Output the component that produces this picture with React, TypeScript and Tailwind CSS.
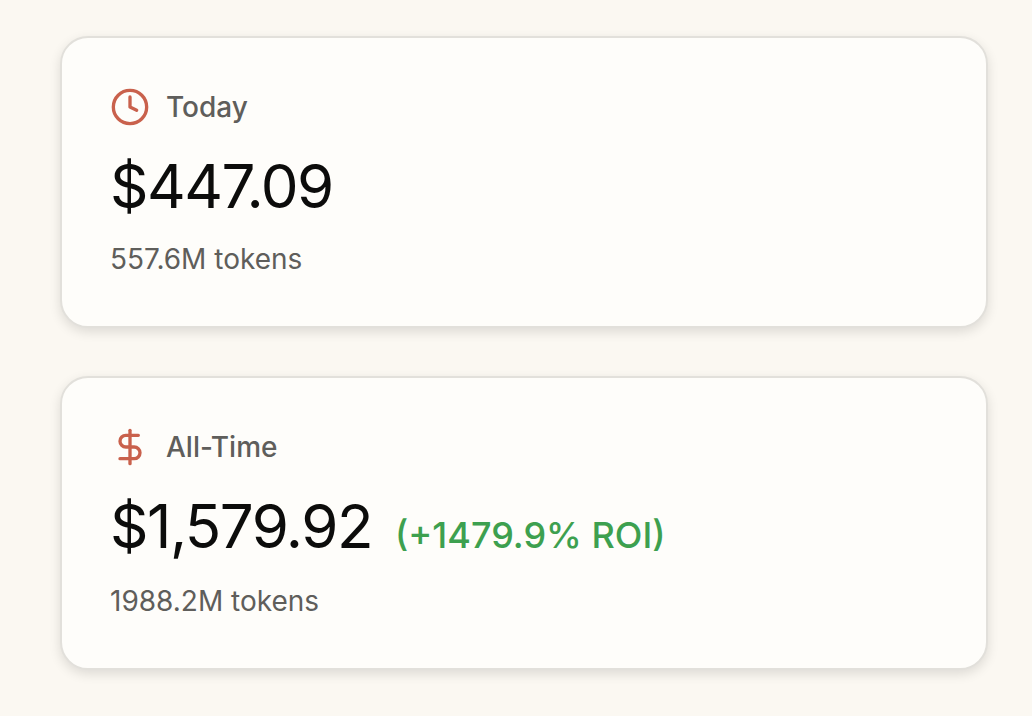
import { Clock, DollarSign } from 'lucide-react';

function StatCard({
  icon,
  label,
  amount,
  roi,
  tokens,
  heightClass,
  rowClass,
}: {
  icon: React.ReactNode;
  label: string;
  amount: string;
  roi?: string;
  tokens: string;
  heightClass: string;
  rowClass: string;
}) {
  return (
    <div
      className={`${heightClass} rounded-[28px] border-2 border-[#e2e0db] bg-[#fefdfa] px-[48px] pt-[49px] shadow-[0_4px_12px_rgba(0,0,0,0.12)]`}
    >
      <div className="flex h-[40px] items-center gap-[16px]">
        {icon}
        <span className="text-[28px] font-[450] leading-[40px] text-[#5f5e5b]">{label}</span>
      </div>
      <div className={`mt-[23px] flex items-baseline ${rowClass}`}>
        <span className="text-[60px] font-normal leading-[72px] tracking-tight text-[#0c0c0b]">{amount}</span>
        {roi && <span className="ml-[23px] text-[36px] font-[450] text-[#3da04f]">{roi}</span>}
      </div>
      <div className="mt-[19px] text-[28px] leading-[36px] text-[#5f5e5b]">{tokens}</div>
    </div>
  );
}

export default function App() {
  return (
    <div className="h-[716px] w-[1032px] overflow-hidden bg-[#fbf8f2] px-[60px] pt-[36px] font-['Inter',sans-serif]">
      <div className="flex w-[928px] flex-col gap-[48px]">
        <StatCard
          heightClass="h-[292px]"
          rowClass="h-[72px]"
          icon={<Clock className="h-[40px] w-[40px] text-[#c9614c]" strokeWidth={2} />}
          label="Today"
          amount="$447.09"
          tokens="557.6M tokens"
        />
        <StatCard
          heightClass="h-[294px]"
          rowClass="h-[74px]"
          icon={<DollarSign className="h-[40px] w-[40px] text-[#c9614c]" strokeWidth={2} />}
          label="All-Time"
          amount="$1,579.92"
          roi="(+1479.9% ROI)"
          tokens="1988.2M tokens"
        />
      </div>
    </div>
  );
}
